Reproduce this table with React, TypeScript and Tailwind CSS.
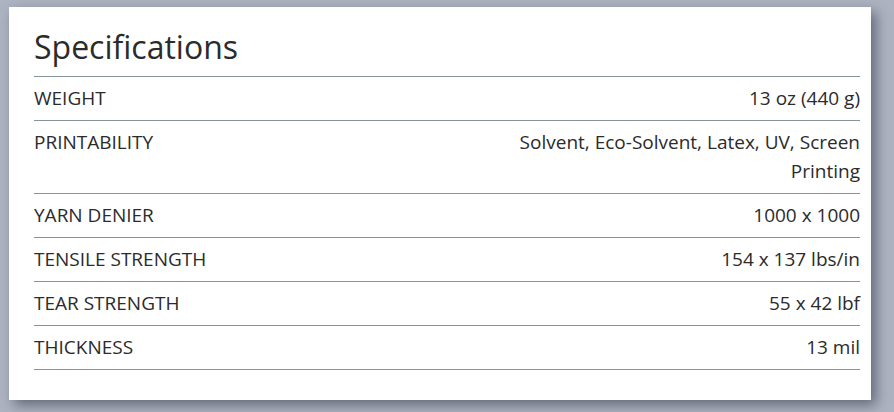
const specs: [string, string][] = [
  ["WEIGHT", "13 oz (440 g)"],
  ["PRINTABILITY", "Solvent, Eco-Solvent, Latex, UV, Screen Printing"],
  ["YARN DENIER", "1000 x 1000"],
  ["TENSILE STRENGTH", "154 x 137 lbs/in"],
  ["TEAR STRENGTH", "55 x 42 lbf"],
  ["THICKNESS", "13 mil"],
];

export default function App() {
  return (
    <div className="h-[412px] w-[894px] overflow-hidden bg-[#adb3c1] pl-[9px] pt-[7px] font-['Open_Sans',sans-serif] text-[#2b2b2b]">
      <div className="h-[393px] w-[862px] bg-white pl-[25px] pr-[11px] pt-[19px] shadow-[5px_5px_12px_rgba(90,96,112,0.9)]">
        <h2 className="border-b border-[#8a929e] pb-[8px] text-[32px] leading-[42px]">Specifications</h2>
        {specs.map(([label, value]) => (
          <div key={label} className="grid grid-cols-2 border-b border-[#8a929e] py-[7px] text-[19px] leading-[29px]">
            <div>{label}</div>
            <div className="pl-[60px] text-right">{value}</div>
          </div>
        ))}
      </div>
    </div>
  );
}
